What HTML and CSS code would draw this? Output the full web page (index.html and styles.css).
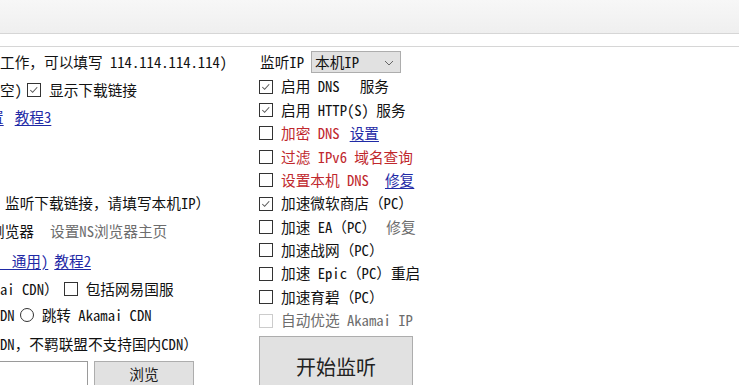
FILE: index.html
```html
<!DOCTYPE html>
<html lang="zh-CN">
<head>
    <meta charset="UTF-8">
    <title>XboxDownload</title>
    <link rel="stylesheet" href="styles.css">
</head>
<body>
    <!-- 顶部工具栏 -->
    <div class="toolbar"></div>
    <div class="tabs"></div>

    <div class="main">
        <!-- 左侧设置 -->
        <div class="left">
            <div class="row">工作，可以填写 114.114.114.114)</div>
            <div class="row">空)<span class="box on"><svg viewBox="0 0 13 13"><path d="M2.5 6.5 L5 9 L10 3.5"/></svg></span>显示下载链接</div>
            <div class="row"><a class="link cut-11">置</a><a class="link gap-11">教程3</a></div>
            <div class="row"></div>
            <div class="row"></div>
            <div class="row indent-5">监听下载链接，请填写本机IP）</div>
            <div class="row"><span class="cut-10">浏览器</span><span class="muted gap-16">设置NS浏览器主页</span></div>
            <div class="row"><a class="link cut-3">　通用)</a><a class="link gap-6">教程2</a></div>
            <div class="row">ai CDN）<span class="box"></span>包括网易国服</div>
            <div class="row">DN<span class="radio"></span>跳转 Akamai CDN</div>
            <div class="row">DN，不羁联盟不支持国内CDN）</div>
            <div class="row top">
                <span class="input"></span>
                <button class="btn browse">浏览</button>
            </div>
        </div>

        <!-- 右侧监听 -->
        <div class="right">
            <div class="listen">
                监听IP
                <div class="select">本机IP
                    <svg class="chev" viewBox="0 0 10 6"><path d="M1 1 L5 5 L9 1"/></svg>
                </div>
            </div>
            <div class="checks">
                <div class="check"><span class="box on"><svg viewBox="0 0 13 13"><path d="M2.5 6.5 L5 9 L10 3.5"/></svg></span>启用 DNS<span class="gap-20">服务</span></div>
                <div class="check"><span class="box on"><svg viewBox="0 0 13 13"><path d="M2.5 6.5 L5 9 L10 3.5"/></svg></span>启用 HTTP(S) 服务</div>
                <div class="check"><span class="box"></span><span class="red">加密 DNS</span><a class="link gap-10">设置</a></div>
                <div class="check"><span class="box"></span><span class="red">过滤 IPv6 域名查询</span></div>
                <div class="check"><span class="box"></span><span class="red">设置本机 DNS</span><a class="link gap-16">修复</a></div>
                <div class="check"><span class="box on"><svg viewBox="0 0 13 13"><path d="M2.5 6.5 L5 9 L10 3.5"/></svg></span>加速微软商店（PC）</div>
                <div class="check"><span class="box"></span>加速 EA（PC）<span class="muted gap-10">修复</span></div>
                <div class="check"><span class="box"></span>加速战网（PC）</div>
                <div class="check"><span class="box"></span>加速 Epic（PC）重启</div>
                <div class="check"><span class="box"></span>加速育碧（PC）</div>
                <div class="check disabled"><span class="box"></span>自动优选 Akamai IP</div>
            </div>
            <button class="btn start">开始监听</button>
        </div>
    </div>
</body>
</html>
```

FILE: styles.css
```css
* {
    margin: 0;
    padding: 0;
    box-sizing: border-box;
}

body {
    width: 739px;
    height: 385px;
    overflow: hidden;
    background: #fff;
    color: #111;
    font-family: "Noto Sans Mono CJK SC", "Noto Sans CJK SC", "Liberation Mono", sans-serif;
    font-size: 14.67px;
    line-height: 1;
}

/* 顶部 */
.toolbar {
    height: 34px;
    background: linear-gradient(#f7f7f7, #efefef);
    border-bottom: 1px solid #d6d6d6;
}

.tabs {
    height: 13px;
    border-bottom: 1px solid #d6d6d6;
}

.main {
    display: flex;
    gap: 9px;
}

/* 左侧 */
.left {
    width: 250px;
    overflow: hidden;
    display: grid;
    grid-template-rows: 29px 26px 29px 28px 29px 28px 29px 30px 26px 26px 33px 30px;
    padding-top: 1px;
}

.row {
    display: flex;
    align-items: center;
    white-space: nowrap;
}

.row.top {
    align-items: flex-start;
}

.indent-5 { padding-left: 5px; }
.cut-3 { margin-left: -3px; }
.cut-10 { margin-left: -10px; }
.cut-11 { margin-left: -11px; }
.gap-6 { margin-left: 6px; }
.gap-10 { margin-left: 10px; }
.gap-11 { margin-left: 11px; }
.gap-16 { margin-left: 16px; }
.gap-20 { margin-left: 20px; }

.link {
    color: #1f2aa6;
    text-decoration: underline;
    text-underline-offset: 2px;
}

.muted {
    color: #6d6d6d;
}

.red {
    color: #c0282d;
}

.box {
    width: 14px;
    height: 14px;
    border: 1px solid #333;
    background: #fff;
    margin: 0 8px 0 5px;
    flex-shrink: 0;
    display: inline-flex;
}

.box svg {
    width: 12px;
    height: 12px;
    fill: none;
    stroke: #555;
    stroke-width: 1.1;
}

.radio {
    width: 14px;
    height: 14px;
    border: 1px solid #333;
    border-radius: 50%;
    margin: 0 8px 0 5px;
}

.input {
    width: 89px;
    height: 26px;
    margin-left: -1px;
    border: 1px solid #9a9a9a;
}

.btn {
    font-family: inherit;
    background: #e1e1e1;
    border: 1px solid #adadad;
    color: #222;
}

.browse {
    width: 100px;
    height: 26px;
    margin-left: 6px;
    font-size: 14.67px;
    padding-bottom: 2px;
}

/* 右侧 */
.right {
    padding-top: 4px;
    display: flex;
    flex-direction: column;
}

.listen {
    display: flex;
    align-items: center;
    gap: 7px;
    height: 22px;
    padding-left: 1px;
}

.select {
    width: 90px;
    height: 22px;
    background: #e1e1e1;
    border: 1px solid #adadad;
    display: flex;
    align-items: center;
    padding-left: 3px;
    position: relative;
}

.chev {
    position: absolute;
    right: 6px;
    top: 8px;
    width: 10px;
    height: 6px;
    fill: none;
    stroke: #666;
    stroke-width: 1;
}

.checks {
    margin-top: 2px;
    display: flex;
    flex-direction: column;
}

.check {
    height: 23.4px;
    display: flex;
    align-items: center;
    white-space: nowrap;
}

.check .box {
    margin: 0 8px 0 0;
}

.check.disabled {
    color: #6d6d6d;
}

.check.disabled .box {
    border-color: #cccccc;
}

.start {
    margin-top: 4px;
    width: 154px;
    height: 62px;
    font-size: 20px;
    padding-bottom: 2px;
}
```
